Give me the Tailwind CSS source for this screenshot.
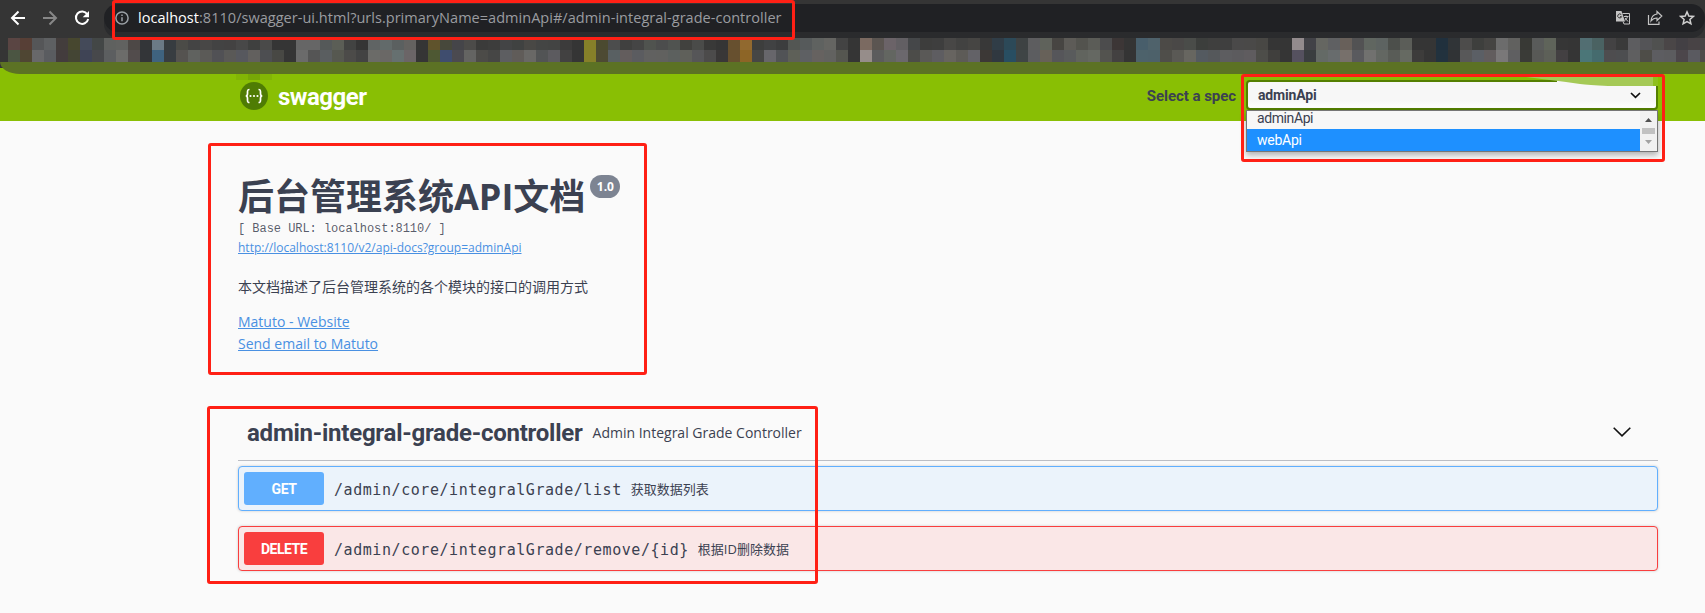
<!DOCTYPE html>
<html lang="zh">
<head>
<meta charset="utf-8">
<title>Swagger UI</title>
<script src="https://cdn.jsdelivr.net/npm/@tailwindcss/browser@4"></script>
</head>
<body class="relative h-[613px] w-[1705px] overflow-hidden bg-[#fafafa] font-['Open_Sans','Noto_Sans_CJK_SC',sans-serif] text-[#3b4151]">

<!-- browser toolbar -->
<div class="flex h-[38px] items-start bg-[#353535] pt-1">
  <div class="flex h-7 w-[104px] items-center gap-[16px] pl-[8px]">
    <svg class="size-[20px]" viewBox="0 0 20 20" fill="none" stroke="#fff" stroke-width="2"><path d="M17 10H4M10.5 3.5L4 10l6.500 6.500"/></svg>
    <svg class="size-[20px] -ml-1" viewBox="0 0 20 20" fill="none" stroke="#878787" stroke-width="2"><path d="M3 10h13M9.500 3.500L16 10l-6.500 6.500"/></svg>
    <svg class="size-[20px] -ml-1" viewBox="0 0 20 20" fill="none" stroke="#fff" stroke-width="2"><path d="M15.300 6.200A6.200 6.200 0 1 0 16.200 11"/><path d="M17 3v6.300h-6.300z" fill="#fff" stroke="none"/></svg>
  </div>
  <div class="relative z-0 flex h-7 flex-1 items-center rounded-l-full rounded-r-full bg-[#202124] pl-[11px] pr-[10px] shadow-[0_6px_0_#2a2b2d]">
    <svg class="size-[14px] shrink-0" viewBox="0 0 14 14" fill="none" stroke="#9aa0a6" stroke-width="1.500"><circle cx="7" cy="7" r="6.100"/><path d="M7 6.300v4M7 3.500v1.500"/></svg>
    <span class="ml-[9px] whitespace-nowrap text-[14.500px] leading-7 tracking-[0.030px] text-[#9a9ca0]"><span class="text-white">localhost</span>:8110/swagger-ui.html?urls.primaryName=adminApi#/admin-integral-grade-controller</span>
    <div class="ml-auto flex items-center gap-[16px]">
      <svg class="size-4" viewBox="0 0 16 16"><path d="M7.500 3.500h7v10.500H9" fill="none" stroke="#c4c4c4"/><path d="M1 1h5.500l3.500 10.500H1z" fill="#c4c4c4"/><path d="M6.300 4.700a2 2 0 1 0 .3 2H5" fill="none" stroke="#333" stroke-width="1"/><path d="M9 6.500h4.500M11 5.500v1M12.500 6.500c-.4 2-1.400 3-2.700 4M10 8l3 3.500M8 11.500l1 2.500" fill="none" stroke="#c4c4c4" stroke-width="1"/></svg>
      <svg class="size-4" viewBox="0 0 16 16" fill="none" stroke="#c4c4c4" stroke-width="1.200"><path d="M1.500 5v9.400h10.500V11.500"/><path d="M10 1.500l4.800 4.500L10 10.500V8c-2.800 0-4.500 1-6 3C4.300 7.500 6 4.500 10 4z"/></svg>
      <svg class="size-4" viewBox="0 0 16 16" fill="none" stroke="#d0d0d0" stroke-width="1.500"><path d="M8 1.900l1.800 4.100 4.500.4-3.400 3 1 4.400L8 11.500l-3.900 2.300 1-4.400-3.400-3 4.500-.4z"/></svg>
    </div>
  </div>
</div>

<!-- pixelated bookmarks bar -->
<div id="bookmarks" class="relative z-10 grid h-6 grid-cols-[repeat(142,12px)] grid-rows-2 overflow-hidden bg-[#353535] pl-2"></div>
<div class="h-3 bg-[linear-gradient(#353535_50%,#89bf04_50%)]"><div class="h-3 rounded-bl-[20px_12px] bg-[#5c7224]"></div></div>

<!-- swagger top bar -->
<header class="relative flex h-[47px] items-center bg-[#89bf04] pl-[240px] pr-[47px]">
  <div class="absolute left-[236px] top-0 h-[6px] w-9 bg-[#82b505]"><div class="ml-3 h-full w-3 bg-[#77a806]"></div></div>
  <svg class="relative -mt-[3px] size-7" viewBox="0 0 28 28"><circle cx="14" cy="14" r="14" fill="#4f7c04"/><path d="M9.500 7.500c-2 0-2 .8-2 2.500v1.800c0 1.400-.5 2.200-1.800 2.200 1.300 0 1.800.8 1.800 2.200V18c0 1.700 0 2.500 2 2.500M18.500 7.500c2 0 2 .8 2 2.500v1.800c0 1.400.5 2.200 1.800 2.200-1.300 0-1.800.8-1.800 2.200V18c0 1.700 0 2.500-2 2.500" fill="none" stroke="#fff" stroke-width="1.700"/><g fill="#fff"><circle cx="10.500" cy="14" r="1.100"/><circle cx="14" cy="14" r="1.100"/><circle cx="17.500" cy="14" r="1.100"/></g></svg>
  <span class="-mt-[2px] ml-[10px] font-['Roboto'] text-[24px] font-bold tracking-[-0.500px] text-white">swagger</span>
  <span class="-mt-[3px] ml-auto mr-[10px] whitespace-nowrap font-['Roboto'] text-[15px] font-bold tracking-[-0.050px]">Select a spec</span>
  <div class="relative -mt-[5px] h-[30px] w-[412px] rounded border-2 border-[#547f00] bg-[linear-gradient(#f7f7f7_70%,#ffffff)] pl-[10px]">
    <span class="block w-max font-['Roboto'] text-[14px] font-bold leading-[27px] tracking-[-0.150px]">adminApi</span>
    <svg class="absolute right-[15px] top-[10px] h-[7px] w-[11px]" viewBox="0 0 11 7" fill="none" stroke="#111" stroke-width="1.700"><path d="M1 1l4.500 4.300L10 1"/></svg>
    <!-- brush smear over the top edge -->
    <svg class="absolute -top-[5px] right-[-2px] h-[9px] w-[132px]" viewBox="0 0 132 9"><path d="M31 3h12l30 6H40V5H31z" fill="#f7f7f7"/><path d="M0 0h127v9H82Q62 8 54 7L40 5Q15 2 0 0z" fill="#a5c956"/><path d="M127 0h5v9h-5z" fill="#8fc01c"/></svg>
    <!-- open option list -->
    <div class="absolute -left-[2px] top-[28px] z-20 flex h-[42px] w-[412px] border border-[#767676] bg-[#f7f7f7] font-['Roboto'] text-[14px] shadow-[0_3px_6px_rgba(0,0,0,.3)]">
      <div class="flex-1">
        <div class="h-[18px] pl-[10px] leading-[14px] tracking-[-0.400px]">adminApi</div>
        <div class="h-[22px] bg-[#1e90ff] pl-[10px] leading-[22px] tracking-[-0.250px] text-white">webApi</div>
      </div>
      <div class="flex w-[17px] flex-col items-center bg-[#f1f1f1] pt-[7px]">
        <svg class="h-1 w-[7px]" viewBox="0 0 7 4"><path d="M0 4l3.500-4L7 4z" fill="#505050"/></svg>
        <div class="mt-[6px] h-[6px] w-[13px] bg-[#c1c1c1]"></div>
        <svg class="mt-[6px] h-1 w-[7px]" viewBox="0 0 7 4"><path d="M0 0l3.500 4L7 0z" fill="#a3a3a3"/></svg>
      </div>
    </div>
  </div>
</header>

<main class="ml-[238px] w-[1420px] pt-[50px]">
  <section class="h-[232px]">
    <div class="flex h-[50px] items-start">
      <h1 class="whitespace-nowrap text-[36px] font-bold leading-[51px]">后台管理系统API文档</h1>
      <span class="ml-[5px] mt-1 flex h-[23px] w-[30px] items-center justify-center rounded-full bg-[#7d8492] text-[12px] font-bold text-white">1.0</span>
    </div>
    <div class="h-[16px] whitespace-nowrap font-['Liberation_Mono'] text-[12px] leading-[16px] tracking-[-0.040px] text-[#3b4151]/85">[ Base URL: localhost:8110/ ]</div>
    <div class="h-[22px] text-[12px] leading-[22px]"><a class="text-[#4990e2] underline">http://localhost:8110/v2/api-docs?group=adminApi</a></div>
    <p class="mt-[16px] h-[24px] text-[14px] leading-6">本文档描述了后台管理系统的各个模块的接口的调用方式</p>
    <div class="mt-[12px] text-[14px] leading-[22px] text-[#4990e2]">
      <div><a class="underline">Matuto - Website</a></div>
      <div><a class="underline">Send email to Matuto</a></div>
    </div>
  </section>

  <section>
    <div class="flex h-[58px] items-center border-b border-[#bcbec4] pl-[9px] pr-[27px]">
      <h2 class="mt-[2px] whitespace-nowrap font-['Roboto'] text-[24px] font-bold tracking-[-0.240px]">admin-integral-grade-controller</h2>
      <span class="ml-[10px] mt-[2px] whitespace-nowrap text-[14px]">Admin Integral Grade Controller</span>
      <svg class="ml-auto h-[10px] w-[18px]" viewBox="0 0 18 10" fill="none" stroke="#111" stroke-width="1.600"><path d="M.7.700L9 8.800 17.300.700"/></svg>
    </div>
    <div class="mt-[5px] flex flex-col gap-[15px]">
      <div class="flex h-[45px] items-center rounded border border-[#61affe] bg-[#ebf3fb] pl-[5px] shadow-[0_0_3px_rgba(0,0,0,.19)]">
        <span class="flex h-[33px] w-20 items-center justify-center rounded-[3px] bg-[#61affe] pt-px font-['Roboto'] text-[14px] font-bold tracking-[-0.400px] text-white">GET</span>
        <span class="ml-[10px] mt-[3px] font-['DejaVu_Sans_Mono'] text-[15px] tracking-[0.560px]">/admin/core/integralGrade/list</span>
        <span class="ml-[9px] mt-[2px] text-[13px]">获取数据列表</span>
      </div>
      <div class="flex h-[45px] items-center rounded border border-[#f93e3e] bg-[#fae7e7] pl-[5px] shadow-[0_0_3px_rgba(0,0,0,.19)]">
        <span class="flex h-[33px] w-20 items-center justify-center rounded-[3px] bg-[#f93e3e] pt-px font-['Roboto'] text-[14px] font-bold tracking-[-0.500px] text-white">DELETE</span>
        <span class="ml-[10px] mt-[3px] font-['DejaVu_Sans_Mono'] text-[15px] tracking-[0.560px]">/admin/core/integralGrade/remove/{id}</span>
        <span class="ml-[9px] mt-[2px] text-[13px]">根据ID删除数据</span>
      </div>
    </div>
  </section>
</main>

<!-- red highlight frames -->
<div class="absolute left-[112px] top-0 z-30 h-10 w-[683px] rounded-[3px] border-[3px] border-[#ff2015]"></div>
<div class="absolute left-[1241px] top-[74px] z-30 h-[88px] w-[424px] rounded-[3px] border-[3px] border-[#ff2015]"></div>
<div class="absolute left-[208px] top-[143px] z-30 h-[232px] w-[439px] rounded-[3px] border-[3px] border-[#ff2015]"></div>
<div class="absolute left-[207px] top-[406px] z-30 h-[178px] w-[611px] rounded-[3px] border-[3px] border-[#ff2015]"></div>

<script>
const rows = [
"5a4543 573f36 555658 5e6062 433d3c 47472f 444a59 434746 5f615f 616260 4d4846 333538 6b7a86 373c40 4b4b47 444444 484746 434343 434242 484848 3f403f 4a4a49 353535 353535 666666 666666 555959 5b5e56 424342 353535 606464 626a6a 5b6060 646260 353535 5f532c 47483b 454549 4c4b49 3b3b3a 3d3d3c 434445 404241 494845 444544 434443 3c3b3b 353535 868029 4b4a30 4c4d4d 40403f 454545 50534f 4c4d4d 505350 41413e 4a4b49 393938 353535 67502f 91692f 3d3e3d 414243 3c3d3e 535653 565a5b 5f6260 656562 434343 353535 7b6a61 5b5551 6b6368 625f63 454749 3d3d3c 3e3e3e 484746 424241 464543 383838 303d47 2c4958 3e4243 5d5d5f 5f625b 474542 5d5b57 53534e 5b5c57 4c4c4d 3c3636 343434 485e6b 4f626b 4c4a47 4a4847 4a4c49 3c3e3c 3f3f3e 3f3f3f 4a4949 4a4948 484744 353535 353535 938b8d 424247 656661 5f6062 68605a 525253 606660 5d6361 4c4f4b 5b5d58 353535 353535 20303d 303437 4d4c4b 3e3f3d 454442 6c6c6c 61615f 383935 595b5a 5f645a 363636 353535 526e72 4a6262 434243 3a3a3a 5d5d60 545457 505150 4a4647 434044 484345 474445",
"4b5542 4f4633 68686a 5a5c60 433c3d 444534 3f4455 47484b 5c5e60 6c6c6a 524c4c 333538 3f637f 383d41 555350 60625f 5b5a57 515155 5a5957 57585e 62605e 4d4e51 484844 353535 6b6b6b 555555 5a5e60 565850 4c4b49 434343 6b6b68 6a6866 667070 6b6567 353535 4e5833 3f4d6e 4b4a50 646462 4c4b48 464645 5d5e61 605c59 696866 525455 5c5b5f 424141 353535 868029 4d4a33 596062 635d5d 5b5c60 616160 61615f 5c605e 5f605a 565658 4c4b4b 393737 67502f 8d6526 464645 67666b 515356 5e6058 5e6063 666260 626260 555650 353535 968d8a 5c5c5d 636661 6b686d 4c4c49 5a5957 5e5d61 676460 5d5b57 636267 3c3836 303840 284e62 3f4546 5c5d60 676159 56565a 595b5c 61645e 656862 53534f 434141 343434 4d626b 4d616a 4f4e4a 5a5955 676660 545a60 55585b 5d5d60 5c5b5e 5f5c5f 4d4d49 403f3d 353535 55515f 3a3e40 646a66 686c6d 77706b 5a5a5e 71716f 636762 595c57 666a62 3d3c3b 353535 22323e 303335 585859 5b5f65 625d5e 7a7879 5f5f61 3a3b37 585956 5d6058 434042 353535 4b7678 456b6e 4e4d4f 4d4e50 5f5f60 4e4d48 5d5d61 5c5c5f 4c464b 5a5a60 4e4b49"];
const bar = document.getElementById("bookmarks");
rows.join(" ").split(" ").forEach(c => {
  const cell = document.createElement("i");
  cell.style.backgroundColor = "#" + c;
  bar.appendChild(cell);
});
</script>
</body>
</html>
